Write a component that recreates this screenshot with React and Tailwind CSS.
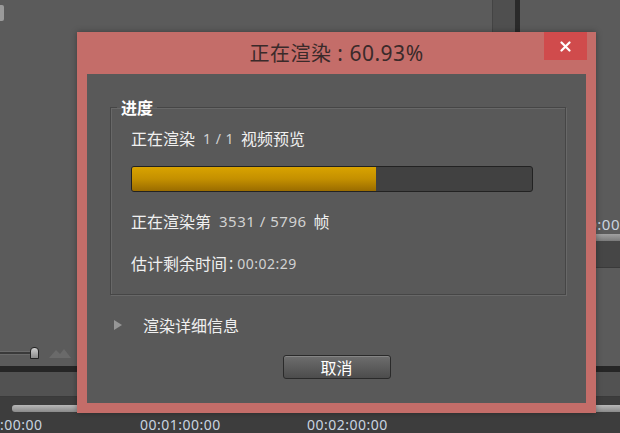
import React from 'react';

const cjk = { fontFamily: '"Microsoft YaHei", "Noto Sans CJK SC", sans-serif' };
const num = { fontFamily: '"Noto Sans", "Open Sans", sans-serif' };

// 背景里的时间码
const Timecode = ({ children, className }) => (
  <span className={`text-[14px] text-[#c9d4e0] tracking-[0.5px] ${className}`} style={num}>{children}</span>
);

const RenderDialog = () => {
  const percent = 60.93;
  return (
    <div className="absolute left-[77px] top-[32px] w-[519px] h-[381px] bg-[#c46d69] flex flex-col shadow-[0_0_6px_rgba(0,0,0,0.35)]">
      {/* 标题栏 */}
      <div className="relative h-[42px] flex items-center justify-center">
        <span className="text-[20px] text-[#3a2a2a] pt-[1px] tracking-[0.5px]" style={cjk}>
          正在渲染<span className="text-[21px]" style={num}> : {percent}%</span>
        </span>
        <button className="absolute right-[9px] top-0 w-[43px] h-[28px] bg-[#d04b4c] flex items-center justify-center">
          <svg width="11" height="11" viewBox="0 0 11 11">
            <path d="M1.5 1.5 L9.5 9.5 M9.5 1.5 L1.5 9.5" stroke="#fff" strokeWidth="2.2" strokeLinecap="round" />
          </svg>
        </button>
      </div>

      {/* 内容 */}
      <div className="mx-[10px] h-[329px] bg-[#595959] flex flex-col" style={cjk}>
        <fieldset className="mt-[24px] ml-[23px] mr-[20px] border border-[#464646] shadow-[1px_1px_0_#686868,inset_1px_1px_0_#686868] pl-[20px] pr-[32px] pb-[21px]">
          <legend className="ml-[-14px] px-[4px] text-[16px] font-bold text-white leading-[18px]">进度</legend>
          <div className="mt-[12px] h-[20px] flex items-center text-[16px] text-[#f0f0f0]">
            正在渲染<span className="ml-[8px] mr-[7px] text-[14px] text-[#d2d2d2] tracking-[0.5px]" style={num}>1 / 1</span>视频预览
          </div>
          <div className="mt-[18px] h-[26px] rounded-[3px] bg-[#414141] border border-[#222] overflow-hidden">
            <div
              className="h-full bg-gradient-to-b from-[#d9a300] via-[#c49000] to-[#9a6c00]"
              style={{ width: `${percent}%` }}
            />
          </div>
          <div className="mt-[19px] h-[20px] flex items-center text-[16px] text-[#f0f0f0]">
            正在渲染第<span className="ml-[8px] mr-[7px] text-[15px] text-[#d2d2d2] tracking-[0.5px]" style={num}>3531 / 5796</span>帧
          </div>
          <div className="mt-[22px] h-[20px] flex items-center text-[16px] text-[#f0f0f0]">
            估计剩余时间<span className="ml-[2px] mr-[4px]" style={num}>:</span>
            <span className="text-[14px] text-[#d2d2d2] tracking-[0.5px]" style={num}>00:02:29</span>
          </div>
        </fieldset>

        <div className="mt-[20px] h-[20px] pl-[27px] flex items-center gap-[21px] text-[16px] text-[#f0f0f0]">
          <svg width="8" height="10" viewBox="0 0 8 10">
            <path d="M0 0 L8 5 L0 10 Z" fill="#969696" />
          </svg>
          渲染详细信息
        </div>

        <div className="mt-[20px] flex justify-center">
          <button className="w-[108px] h-[24px] rounded-[3px] border border-[#2a2a2a] bg-gradient-to-b from-[#6e6e6e] to-[#4c4c4c] shadow-[inset_0_1px_0_#858585] text-[16px] text-white leading-none">
            取消
          </button>
        </div>
      </div>
    </div>
  );
};

export default function App() {
  return (
    <div className="relative w-[620px] h-[433px] overflow-hidden bg-[#5b5b5b]">
      <div className="flex flex-col h-full">
        {/* 上部面板 */}
        <div className="h-[340px] flex">
          <div className="w-[508px] relative">
            <div className="w-[4px] h-[16px] mt-[5px] bg-[#9a9a9a] rounded-r-[2px]" />
          </div>
          <div className="w-[24px] bg-[#4f4f4f] border-l border-[#444]" />
          <div className="w-[5px] bg-[#2a2a2a]" />
          <div className="flex-1 flex flex-col">
            <div className="h-[212px]" />
            <div className="h-[22px] pl-[59px] overflow-hidden whitespace-nowrap">
              <Timecode className="text-[#9aa3ad] text-[15px]">00:00</Timecode>
            </div>
            <div className="h-[7px] bg-gradient-to-b from-[#a0a0a0] to-[#7a7a7a]" />
            <div className="h-[27px] bg-[#464646] border-b border-[#3a3a3a]" />
          </div>
        </div>

        {/* 滑块行 */}
        <div className="h-[26px] flex items-center">
          <div className="w-[30px] h-[4px] bg-[#3a3a3a] border-y border-[#6a6a6a]" />
          <div className="w-[9px] h-[12px] bg-gradient-to-b from-[#d0d0d0] to-[#8a8a8a] rounded-t-[4px] border border-[#222]" />
          <svg className="ml-[10px]" width="22" height="10" viewBox="0 0 22 10">
            <path d="M0 10 L7 2 L11 6 L15 1 L22 10 Z" fill="#6a6a6a" />
          </svg>
        </div>
        <div className="h-[6px] bg-[#262626]" />
        <div className="h-[25px] bg-[#525252] border-b border-[#3a3a3a]" />

        {/* 时间线 */}
        <div className="flex-1 bg-[#3d3d3d] flex flex-col">
          <div className="mt-[8px] ml-[12px] h-[7px] bg-gradient-to-b from-[#b8b8b8] to-[#8a8a8a] rounded-l-[3px]" />
          <div className="relative h-[18px] mt-[2px]">
            <Timecode className="absolute left-0 top-0">:00:00</Timecode>
            <Timecode className="absolute left-[140px] top-0">00:01:00:00</Timecode>
            <Timecode className="absolute left-[307px] top-0">00:02:00:00</Timecode>
          </div>
        </div>
      </div>

      <RenderDialog />
    </div>
  );
}
